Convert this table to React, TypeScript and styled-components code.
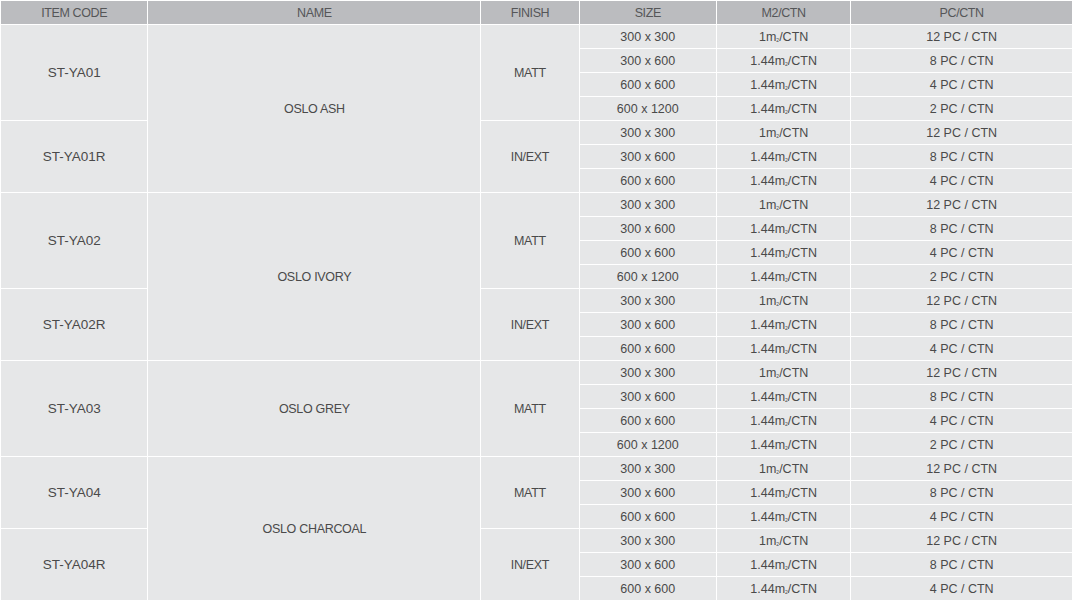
import React from 'react';
import styled, { createGlobalStyle } from 'styled-components';

const GlobalStyle = createGlobalStyle`
  html, body {
    margin: 0;
    padding: 0;
    background: #ffffff;
  }
`;

const Table = styled.table`
  width: 1073px;
  table-layout: fixed;
  border-collapse: separate;
  border-spacing: 1px;
  font-family: 'Liberation Sans', Arial, sans-serif;
  font-size: 12.5px;
  color: #4a4a4a;
`;

const Th = styled.th<{ $w: number }>`
  width: ${(p) => p.$w}px;
  height: 23px;
  padding: 0;
  background-color: #bbbcbf;
  color: #555658;
  font-size: 12.5px;
  font-weight: normal;
  letter-spacing: -0.4px;
  text-align: center;
  vertical-align: middle;
`;

const Td = styled.td<{ $big?: boolean }>`
  height: 23px;
  padding: 0;
  background-color: #e6e7e8;
  font-size: ${(p) => (p.$big ? '13.5px' : '12.5px')};
  text-align: center;
  vertical-align: middle;
  white-space: nowrap;
`;

const Tight = styled.span`
  letter-spacing: -0.3px;
`;

const Sub = styled.span`
  font-size: 5px;
  vertical-align: -1px;
`;

type Group = {
  code: string;
  name?: { label: string; span: number };
  finish: string;
  sizes: string[];
};

const full = ['300 x 300', '300 x 600', '600 x 600', '600 x 1200'];
const short = ['300 x 300', '300 x 600', '600 x 600'];

const m2: Record<string, string> = {
  '300 x 300': '1',
  '300 x 600': '1.44',
  '600 x 600': '1.44',
  '600 x 1200': '1.44',
};
const pc: Record<string, string> = {
  '300 x 300': '12 PC / CTN',
  '300 x 600': '8 PC / CTN',
  '600 x 600': '4 PC / CTN',
  '600 x 1200': '2 PC / CTN',
};

const groups: Group[] = [
  { code: 'ST-YA01', name: { label: 'OSLO ASH', span: 7 }, finish: 'MATT', sizes: full },
  { code: 'ST-YA01R', finish: 'IN/EXT', sizes: short },
  { code: 'ST-YA02', name: { label: 'OSLO IVORY', span: 7 }, finish: 'MATT', sizes: full },
  { code: 'ST-YA02R', finish: 'IN/EXT', sizes: short },
  { code: 'ST-YA03', name: { label: 'OSLO GREY', span: 4 }, finish: 'MATT', sizes: full },
  { code: 'ST-YA04', name: { label: 'OSLO CHARCOAL', span: 6 }, finish: 'MATT', sizes: short },
  { code: 'ST-YA04R', finish: 'IN/EXT', sizes: short },
];

const App = () => {
  return (
    <>
      <GlobalStyle />
      <Table>
        <thead>
          <tr>
            <Th $w={146}>ITEM CODE</Th>
            <Th $w={331}>NAME</Th>
            <Th $w={97}>FINISH</Th>
            <Th $w={136}>SIZE</Th>
            <Th $w={133}>M2/CTN</Th>
            <Th $w={220}>PC/CTN</Th>
          </tr>
        </thead>
        <tbody>
          {groups.map((g) =>
            g.sizes.map((s, i) => (
              <tr key={g.code + s}>
                {i === 0 && (
                  <Td $big rowSpan={g.sizes.length}>
                    {g.code}
                  </Td>
                )}
                {i === 0 && g.name && (
                  <Td rowSpan={g.name.span}>
                    <Tight>{g.name.label}</Tight>
                  </Td>
                )}
                {i === 0 && (
                  <Td rowSpan={g.sizes.length}>
                    <Tight>{g.finish}</Tight>
                  </Td>
                )}
                <Td>{s}</Td>
                <Td>
                  {m2[s]}m<Sub>2</Sub>/CTN
                </Td>
                <Td>{pc[s]}</Td>
              </tr>
            ))
          )}
        </tbody>
      </Table>
    </>
  );
};

export default App;
